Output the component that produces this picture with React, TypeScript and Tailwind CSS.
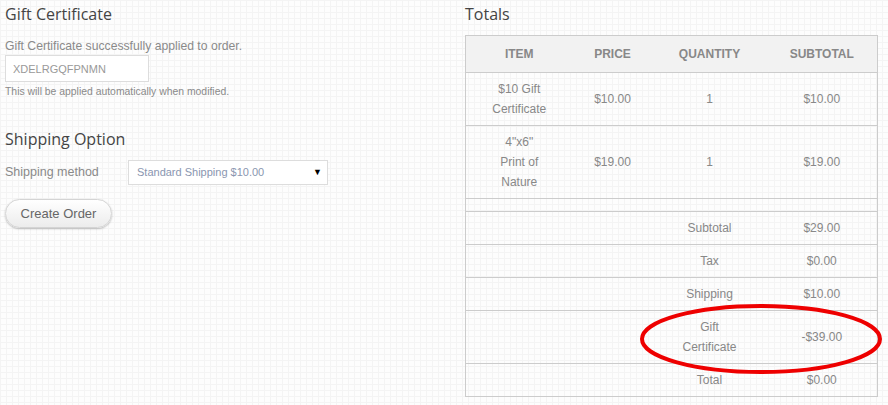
import React from "react";

type Line = { label: string; value: string };

const items = [
  { name: "$10 Gift Certificate", price: "$10.00", qty: "1", subtotal: "$10.00" },
  { name: '4"x6" Print of Nature', price: "$19.00", qty: "1", subtotal: "$19.00" },
];

const totals: Line[] = [
  { label: "Subtotal", value: "$29.00" },
  { label: "Tax", value: "$0.00" },
  { label: "Shipping", value: "$10.00" },
  { label: "Gift Certificate", value: "-$39.00" },
  { label: "Total", value: "$0.00" },
];

const heading = "text-[16px] leading-[20px] text-[#444] font-['Open_Sans',sans-serif]";

export default function App() {
  return (
    <main className="min-h-screen w-[888px] h-[405px] bg-[#fdfdfd] bg-[linear-gradient(#f4f4f4_1px,transparent_1px),linear-gradient(90deg,#f4f4f4_1px,transparent_1px)] bg-[size:6px_6px] font-['Liberation_Sans',Arial,sans-serif] text-[#888]">
      <div className="flex pt-[4px]">
        {/* left column */}
        <section className="w-[460px] pl-[5px]">
          <h2 className={heading}>Gift Certificate</h2>
          <p className="mt-[14px] text-[12.2px] leading-[16px] text-[#8a8a8a]">
            Gift Certificate successfully applied to order.
          </p>
          <input
            readOnly
            value="XDELRGQFPNMN"
            className="mt-[1px] block w-[144px] h-[27px] border border-[#ddd] bg-white px-[7px] text-[11px] text-[#999] outline-none"
          />
          <p className="mt-[3px] text-[10.4px] leading-[14px] text-[#8a8a8a]">
            This will be applied automatically when modified.
          </p>

          <h2 className={`${heading} mt-[30px]`}>Shipping Option</h2>
          <div className="mt-[11px] flex items-center">
            <span className="w-[123px] text-[12.5px] text-[#8a8a8a]">Shipping method</span>
            <div className="flex w-[200px] h-[25px] items-center justify-between border border-[#ddd] bg-white pl-[8px] pr-[5px]">
              <span className="text-[11px] text-[#8a96b0]">Standard Shipping $10.00</span>
              <span className="text-[9px] text-black">▼</span>
            </div>
          </div>
          <button className="mt-[14px] h-[29px] w-[107px] rounded-[15px] border border-[#d4d4d4] bg-[linear-gradient(#fff,#ececec)] text-[13px] text-[#666] shadow-[0_1px_2px_rgba(0,0,0,0.25)]">
            Create Order
          </button>
        </section>

        {/* right column */}
        <section className="pl-[5px] relative">
          <h2 className={heading}>Totals</h2>
          <table className="mt-[11px] table-fixed w-[412px] border border-[#ccc] border-collapse text-[12px] leading-[20px] text-center text-[#888]">
            <colgroup>
              <col className="w-[107px]" />
              <col className="w-[80px]" />
              <col className="w-[114px]" />
              <col className="w-[111px]" />
            </colgroup>
            <thead>
              <tr className="bg-[#f2f2f2]">
                <th className="py-[8px] font-bold">ITEM</th>
                <th className="py-[8px] font-bold">PRICE</th>
                <th className="py-[8px] font-bold">QUANTITY</th>
                <th className="py-[8px] font-bold">SUBTOTAL</th>
              </tr>
            </thead>
            <tbody>
              {items.map((it) => (
                <tr key={it.name} className="border-t border-[#ccc]">
                  <td className="px-[26px] py-[6px]">{it.name}</td>
                  <td className="py-[6px]">{it.price}</td>
                  <td className="py-[6px]">{it.qty}</td>
                  <td className="py-[6px]">{it.subtotal}</td>
                </tr>
              ))}
              <tr className="border-t border-[#ccc] h-[13px]">
                <td colSpan={4} />
              </tr>
              {totals.map((t) => (
                <tr key={t.label} className="border-t border-[#ccc]">
                  <td />
                  <td />
                  <td className="px-[20px] py-[6px]">{t.label}</td>
                  <td className="py-[6px]">{t.value}</td>
                </tr>
              ))}
            </tbody>
          </table>

          {/* red annotation */}
          <svg
            className="absolute left-[178px] top-[297px] pointer-events-none"
            width="246"
            height="80"
            viewBox="0 0 246 80"
          >
            <ellipse cx="123" cy="38" rx="119" ry="33" fill="none" stroke="#ee0000" strokeWidth="4" />
          </svg>
        </section>
      </div>
    </main>
  );
}
